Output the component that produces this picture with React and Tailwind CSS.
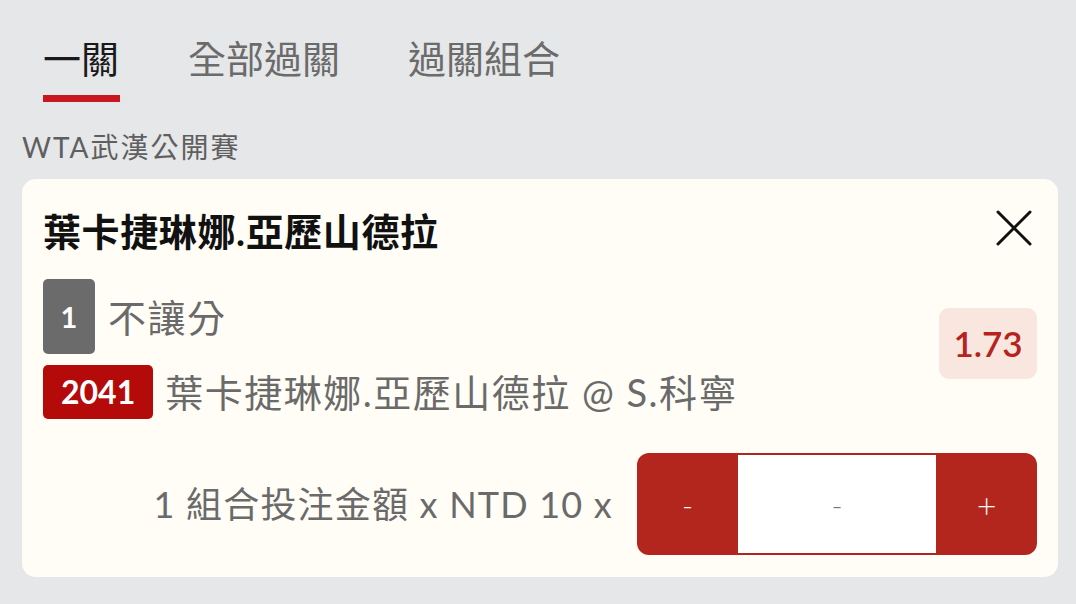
import React from "react";

const FONT = { fontFamily: "Lato, 'Noto Sans CJK TC', 'Noto Sans', sans-serif" };

export default function App() {
  const tabs = [
    { label: "一關", active: true },
    { label: "全部過關", active: false },
    { label: "過關組合", active: false },
  ];
  return (
    <div className="w-[1076px] h-[604px] bg-[#e6e7e9] overflow-hidden" style={FONT}>
      <div className="flex items-start gap-[68px] pl-[43px] pt-[38px]">
        {tabs.map((t) => (
          <div key={t.label} className="flex flex-col">
            <div
              className={
                "text-[38px] leading-[40px] whitespace-nowrap " +
                (t.active ? "text-[#1a1a1a]" : "text-[#6b6b6b]")
              }
            >
              {t.label}
            </div>
            {t.active && <div className="mt-[17px] h-[7px] w-[77px] bg-[#c8171e]" />}
          </div>
        ))}
      </div>

      <div className="pl-[22px] mt-[28px] text-[28px] leading-[34px] text-[#5f5f5f] tracking-[2px]">
        WTA武漢公開賽
      </div>

      <div className="ml-[22px] mr-[18px] mt-[15px] rounded-[14px] bg-[#fffdf6] px-[21px] pt-[30px] pb-[22px]">
        <div className="flex items-center justify-between">
          <div className="text-[38px] leading-[44px] font-bold text-[#111] tracking-[0.6px]">葉卡捷琳娜.亞歷山德拉</div>
          <svg width="36" height="36" viewBox="0 0 36 36" className="mr-[5px] mb-[7px]">
            <path d="M2 2 L34 34 M34 2 L2 34" stroke="#111" strokeWidth="3" strokeLinecap="round" fill="none" />
          </svg>
        </div>

        <div className="mt-[26px] flex items-center justify-between">
          <div className="flex flex-col gap-[11px]">
            <div className="flex items-center gap-[13px]">
              <div className="w-[52px] h-[75px] rounded-[5px] bg-[#6b6b6b] flex items-center justify-center text-white text-[29px] font-bold">
                1
              </div>
              <div className="text-[38px] leading-[44px] text-[#6a6a6a] tracking-[1.5px]">不讓分</div>
            </div>
            <div className="flex items-center gap-[12px]">
              <div className="h-[54px] px-[18px] rounded-[5px] bg-[#b40a0a] flex items-center justify-center text-white text-[32px] font-bold">
                2041
              </div>
              <div className="text-[38px] leading-[44px] text-[#6a6a6a] whitespace-nowrap tracking-[1.5px]">
                葉卡捷琳娜.亞歷山德拉 @ S.科寧
              </div>
            </div>
          </div>
          <div className="mb-[12px] w-[98px] h-[71px] rounded-[10px] bg-[#f8e6df] flex items-center justify-center text-[35px] font-semibold text-[#b5231c]">
            1.73
          </div>
        </div>

        <div className="mt-[34px] flex items-center justify-end gap-[24px]">
          <div className="text-[36px] leading-[44px] text-[#6a6a6a] whitespace-nowrap tracking-[1.2px]">
            1 組合投注金額 x NTD 10 x
          </div>
          <div className="w-[400px] h-[102px] rounded-[12px] bg-[#b3261e] flex overflow-hidden">
            <div className="w-[101px] flex items-center justify-center text-white text-[30px] font-light">-</div>
            <div className="flex-1 my-[2px] bg-white flex items-center justify-center text-[#777] text-[30px] font-light">
              -
            </div>
            <div className="w-[101px] flex items-center justify-center text-white text-[34px] font-light">+</div>
          </div>
        </div>
      </div>
    </div>
  );
}
